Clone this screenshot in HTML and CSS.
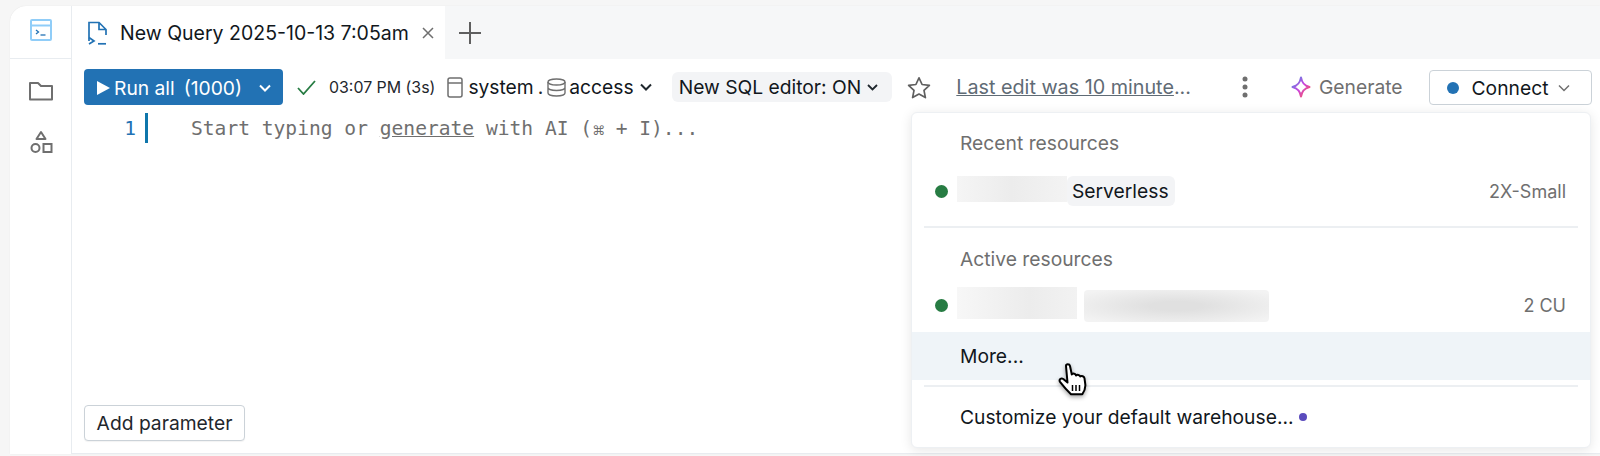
FILE: index.html
```html
<!DOCTYPE html>
<html lang="en">
<head>
    <meta charset="UTF-8">
    <title>New Query 2025-10-13 7:05am</title>
    <link rel="stylesheet" href="styles.css">
</head>
<body>
    <div class="shell">
        <aside class="sidebar">
            <div class="side-top">
                <svg width="22" height="22" viewBox="0 0 22 22" fill="none" stroke="#90cdf8" stroke-width="2"><rect x="1" y="1" width="20" height="20" rx="1"/><path d="M1 6.500h20"/><path d="M6 11l2.500 2L6 15" stroke="#2272b4" stroke-width="1.300"/><path d="M10.500 16h5" stroke="#2272b4" stroke-width="1.300"/></svg>
            </div>
            <div class="side-icons">
                <svg width="26" height="20" viewBox="0 0 26 20" fill="none" stroke="#6f6f6f" stroke-width="2"><path d="M2 2h8l3 3h11v13.500H2z" stroke-linejoin="round"/></svg>
                <svg width="24" height="24" viewBox="0 0 24 24" fill="none" stroke="#6f6f6f" stroke-width="2"><path d="M12 2l4.500 7h-9z" stroke-linejoin="round"/><circle cx="6.500" cy="18" r="4"/><rect x="14.500" y="14" width="8" height="8"/></svg>
            </div>
        </aside>

        <main class="main">
            <div class="tabbar">
                <div class="tab">
                    <svg width="21" height="24" viewBox="0 0 21 24" fill="none" stroke="#2272b4" stroke-width="1.700"><path d="M2 20V1.500h10l7 7V14M12 1.500v7h7"/><path d="M2 16.500l5 3.500-5 3"/><path d="M11 22.800h8"/></svg>
                    <span class="tab-title">New Query 2025-10-13 7:05am</span>
                    <svg class="tab-close" width="12" height="12" viewBox="0 0 12 12" stroke="#6f6f6f" stroke-width="1.500"><path d="M1 1l10 10M11 1L1 11"/></svg>
                </div>
                <div class="tab-add">
                    <svg width="22" height="22" viewBox="0 0 22 22" stroke="#5f5f5f" stroke-width="2"><path d="M11 0v22M0 11h22"/></svg>
                </div>
            </div>

            <div class="toolbar">
                <button class="run-btn">
                    <svg width="13" height="14" viewBox="0 0 13 14"><path d="M0 0l13 7-13 7z" fill="#fff"/></svg>
                    <span class="run-label">Run all</span>
                    <span class="run-limit">(1000)</span>
                    <svg class="run-caret" width="12" height="8" viewBox="0 0 12 8" fill="none" stroke="#fff" stroke-width="2"><path d="M1 1.500l5 5 5-5"/></svg>
                </button>
                <svg class="check" width="19" height="15" viewBox="0 0 19 15" fill="none" stroke="#277c43" stroke-width="1.800"><path d="M1 8l5.500 6L18 1"/></svg>
                <span class="run-time">03:07 PM (3s)</span>
                <svg class="catalog-icon" width="16" height="21" viewBox="0 0 16 21" fill="none" stroke="#6f6f6f" stroke-width="1.500"><rect x="1" y="1" width="14" height="19" rx="2"/><path d="M1 6h14"/></svg>
                <span class="catalog">system</span>
                <span class="catalog-dot">.</span>
                <svg class="db-icon" width="19" height="19" viewBox="0 0 19 19" fill="none" stroke="#6f6f6f" stroke-width="1.400"><ellipse cx="9.500" cy="4" rx="8.500" ry="3"/><path d="M1 4v11c0 1.700 3.800 3 8.500 3s8.500-1.300 8.500-3V4M1 9.500c0 1.700 3.800 3 8.500 3s8.500-1.300 8.500-3"/></svg>
                <span class="catalog schema">access</span>
                <svg class="schema-caret" width="12" height="8" viewBox="0 0 12 8" fill="none" stroke="#1f272d" stroke-width="2"><path d="M1 1.500l5 5 5-5"/></svg>
                <div class="editor-chip">
                    <span>New SQL editor: ON</span>
                    <svg width="11" height="7" viewBox="0 0 11 7" fill="none" stroke="#1f272d" stroke-width="1.800"><path d="M1 1l4.500 4.500L10 1"/></svg>
                </div>
                <svg class="star" width="24" height="23" viewBox="0 0 24 23" fill="none" stroke="#5f5f5f" stroke-width="1.700"><path d="M12 1.800l3.100 6.700 7.300.9-5.400 5 1.400 7.200L12 18.100l-6.400 3.500L7 14.400l-5.400-5 7.300-.9z" stroke-linejoin="round"/></svg>
                <a class="last-edit">Last edit was 10 minute<span class="ellipsis">...</span></a>
                <svg class="kebab" width="6" height="22" viewBox="0 0 6 22" fill="#6f6f6f"><circle cx="3" cy="3" r="2.500"/><circle cx="3" cy="11" r="2.500"/><circle cx="3" cy="19" r="2.500"/></svg>
                <svg class="sparkle" width="22" height="22" viewBox="0 0 22 22" fill="none" stroke="url(#sparkleGrad)" stroke-width="2">
                    <defs><linearGradient id="sparkleGrad" x1="0" y1="0" x2="1" y2="1"><stop offset="0" stop-color="#4299e0"/><stop offset="0.500" stop-color="#ca42e0"/><stop offset="1" stop-color="#ff5f46"/></linearGradient></defs>
                    <path d="M11 1.500c1 5.500 3 8 8.500 9.500-5.500 1.500-7.500 4-8.500 9.500-1-5.500-3-8-8.500-9.500C8 9.500 10 7 11 1.500z" stroke-linejoin="round"/>
                </svg>
                <span class="generate">Generate</span>
                <button class="connect-btn">
                    <span class="connect-dot"></span>
                    <span>Connect</span>
                    <svg width="12" height="8" viewBox="0 0 12 8" fill="none" stroke="#6f6f6f" stroke-width="1.500"><path d="M1 1.500l5 5 5-5"/></svg>
                </button>
            </div>

            <div class="editor">
                <div class="code-line">
                    <span class="line-no">1</span>
                    <span class="line-bar"></span>
                    <span class="placeholder">Start typing or <u>generate</u> with AI (<span class="cmd">⌘</span> + I)...</span>
                </div>
                <button class="param-btn">Add parameter</button>
            </div>

            <div class="menu">
                <div class="menu-title">Recent resources</div>
                <div class="res-row recent">
                    <span class="res-dot"></span>
                    <span class="blur-a"></span>
                    <span class="tag">Serverless</span>
                    <span class="res-size">2X-Small</span>
                </div>
                <div class="menu-sep"></div>
                <div class="menu-title active-title">Active resources</div>
                <div class="res-row active">
                    <span class="res-dot"></span>
                    <span class="blur-b"></span>
                    <span class="blur-c"></span>
                    <span class="res-size">2 CU</span>
                </div>
                <div class="menu-item hover">More...</div>
                <div class="menu-sep second"></div>
                <div class="menu-item custom">Customize your default warehouse... <span class="new-dot"></span></div>
            </div>

            <svg class="hand" width="32" height="34" viewBox="0 0 32 34">
                <path d="M8 3C8 .8 11.500.8 12 3l1.800 8.500c1.200-1.500 3.700-1 4.200 1 1.200-1.200 3.600-.7 4.200 1 1.500-1 3.800-.2 4.300 1.800l.8 6c.4 4-1 7-3 10H13c-3-3-7.500-8-11-12.500-1.300-2 1-4.300 3.300-2.800l4.200 3.500z" fill="#fff" stroke="#000" stroke-width="2" stroke-linejoin="round"/>
                <path d="M14.500 22v6M18 22v6M21.500 22v6" stroke="#000" stroke-width="1.500"/>
            </svg>
        </main>
    </div>
</body>
</html>
```

FILE: styles.css
```css
* { box-sizing: border-box; }
body { margin: 0; height: 456px; overflow: hidden; background: #f6f6f6; font-family: Inter, "Liberation Sans", sans-serif; color: #1f272d; }
button { font-family: inherit; }

.shell { display: flex; height: 448px; margin: 6px 0 0 10px; background: white; border-top-left-radius: 16px; box-shadow: 0 0 1px rgba(0, 0, 0, 0.12); }

.sidebar { width: 62px; flex: none; border-right: 1px solid #e8ecf0; }
.side-top { height: 53px; display: flex; justify-content: center; padding-top: 13px; border-bottom: 1px solid #e8ecf0; }
.side-icons { display: flex; flex-direction: column; align-items: center; gap: 29px; padding-top: 22px; }

.main { position: relative; flex: 1; display: flex; flex-direction: column; min-width: 0; }

.tabbar { display: flex; height: 53px; flex: none; background: #f6f7f8; }
.tab { display: flex; align-items: center; width: 373px; padding-left: 15px; background: white; }
.tab-title { margin-left: 12px; font-size: 19.500px; white-space: nowrap; color: #11171c; }
.tab-close { margin-left: 13px; }
.tab-add { display: flex; align-items: center; padding-left: 14px; }

.toolbar { display: flex; align-items: center; height: 36px; margin-top: 10px; padding-left: 12px; flex: none; font-size: 19.250px; }

.run-btn { display: flex; align-items: center; width: 199px; height: 36px; padding: 2px 0 0 13px; border: none; border-radius: 4px; background: #2272b4; color: white; font-size: 19.250px; }
.run-label { margin-left: 4px; }
.run-limit { margin-left: 9px; }
.run-caret { margin-left: 17px; }

.check { margin-left: 14px; }
.run-time { margin-left: 13px; font-size: 15.900px; white-space: nowrap; }
.catalog-icon { margin-left: 12px; }
.catalog { margin-left: 5px; color: #11171c; }
.catalog.schema { margin-left: 3px; }
.catalog-dot { margin-left: 4px; }
.db-icon { margin-left: 4px; }
.schema-caret { margin-left: 6px; }

.editor-chip { display: flex; align-items: center; gap: 6px; height: 30px; margin-left: 20px; padding: 0 14px 0 7px; border-radius: 6px; background: #f3f4f6; color: #11171c; white-space: nowrap; }
.star { margin-left: 15px; }
.last-edit { margin-left: 25px; font-size: 19.750px; color: #5f6b75; white-space: nowrap; text-decoration: underline; }
.ellipsis { display: inline-block; text-decoration: none; }
.kebab { margin-left: 51px; }
.sparkle { margin-left: 42px; }
.generate { margin-left: 7px; color: #6f6f6f; }

.connect-btn { display: flex; align-items: center; width: 163px; height: 35px; margin-left: 26px; padding: 2px 0 0 17px; border: 1px solid #cbd2d8; border-radius: 4px; background: white; color: #11171c; font-size: 19.250px; flex: none; }
.connect-dot { width: 12px; height: 12px; margin-right: 13px; border-radius: 50%; background: #2272b4; }
.connect-btn svg { margin-left: 10px; }

.editor { flex: 1; display: flex; flex-direction: column; padding: 8px 0 12px 12px; border-bottom: 1px solid #e8ecf0; }
.code-line { display: flex; align-items: center; height: 30px; font-family: "DejaVu Sans Mono", monospace; font-size: 19.600px; }
.line-no { width: 52px; text-align: right; color: #2272b4; font-size: 19.500px; }
.line-bar { width: 3px; height: 30px; margin-left: 9px; background: #0f76ab; }
.placeholder { margin-left: 43px; color: #6f6f6f; white-space: pre; }
.cmd { font-family: "DejaVu Sans", sans-serif; font-size: 13px; display: inline-block; width: 11.800px; text-align: center; }

.param-btn { width: 161px; height: 36px; margin-top: auto; padding: 0; border: 1px solid #cbd2d8; border-radius: 4px; background: white; color: #1f272d; font-size: 19.250px; box-shadow: 0 1px 1px rgba(0, 0, 0, 0.05); }

.menu { position: absolute; left: 839px; top: 106px; width: 680px; height: 336px; padding-top: 17px; border-radius: 6px; background: white; border: 1px solid #edf0f3; box-shadow: 0 2px 12px rgba(0, 0, 0, 0.1); font-size: 19.250px; }
.menu-title { height: 26px; padding-left: 48px; line-height: 26px; color: #6f6f6f; }
.active-title { margin-top: 18px; }
.res-row { display: flex; align-items: center; padding: 0 24px 0 23px; color: #11171c; }
.res-row.recent { height: 30px; margin-top: 20px; }
.res-row.active { height: 36px; margin-top: 15px; }
.res-dot { width: 13px; height: 13px; border-radius: 50%; background: #277c43; }
.blur-a { width: 110px; height: 26px; margin: -4px 0 0 9px; background: linear-gradient(90deg, #f5f5f5, #ececec 50%, #f3f3f3); }
.blur-b { width: 120px; height: 32px; margin: -4px 0 0 9px; background: linear-gradient(90deg, #f7f7f7, #ececec 60%, #f2f2f2); }
.blur-c { width: 185px; height: 32px; margin: 2px 0 0 7px; border-radius: 4px; background: radial-gradient(ellipse at center, #e0e0e0 20%, #f3f3f3 90%); }
.tag { padding: 0 6px 0 5px; height: 30px; line-height: 30px; border-radius: 6px; background: #f3f4f6; }
.res-size { margin-left: auto; color: #6f6f6f; font-size: 18px; }
.menu-sep { height: 2px; margin: 20px 12px 0; background: #eceff2; }
.menu-item { display: flex; align-items: center; gap: 5px; padding-left: 48px; color: #11171c; }
.menu-item.hover { height: 48px; margin-top: 9px; background: #eff4f8; }
.menu-sep.second { margin-top: 5px; }
.menu-item.custom { height: 60px; }
.new-dot { width: 8px; height: 8px; border-radius: 50%; background: #5a4bbd; }

.hand { position: absolute; left: 986px; top: 357px; filter: drop-shadow(0 2px 2px rgba(0, 0, 0, 0.35)); }
```
